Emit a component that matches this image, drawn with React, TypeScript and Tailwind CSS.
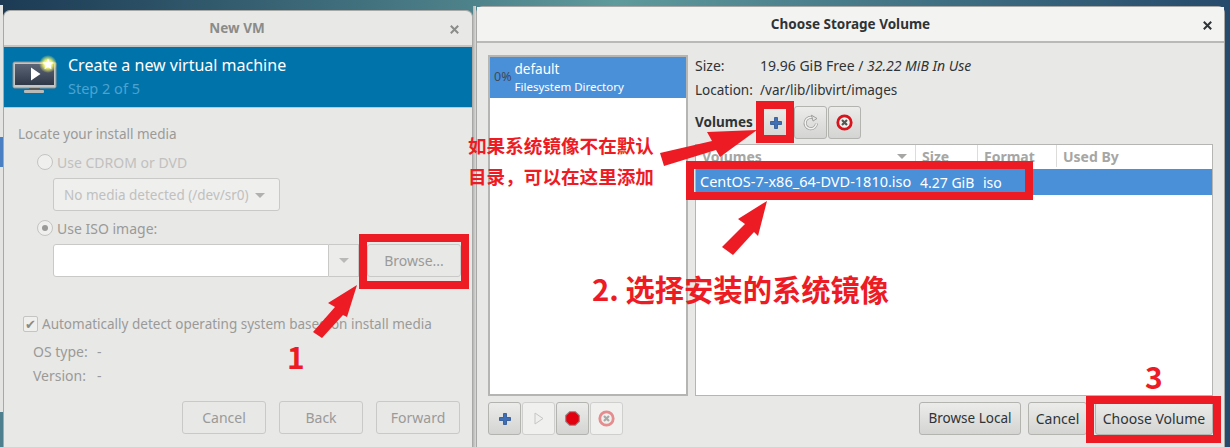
import type { ReactNode } from "react";

const UI_FONT = "font-['Noto_Sans','Open_Sans',sans-serif]";
const CJK_FONT = "font-['Noto_Sans_CJK_SC','Noto_Sans',sans-serif]";

function PlusIcon() {
  return (
    <svg width="14" height="14" viewBox="0 0 14 14">
      <path d="M5.5 1.5h3v4h4v3h-4v4h-3v-4h-4v-3h4z" fill="#3f6fb5" stroke="#2a5291" strokeWidth="0.8" strokeLinejoin="round" />
    </svg>
  );
}

function RefreshIcon() {
  return (
    <svg width="18" height="18" viewBox="0 0 18 18" fill="none">
      <path d="M14.5 9.500A5.700 5.700 0 1 1 11.500 4" stroke="#9b9b99" strokeWidth="3" />
      <path d="M14.5 9.500A5.700 5.700 0 1 1 11.500 4" stroke="#f2f2f1" strokeWidth="1.600" />
      <path d="M9.500 1.200l5.500 3.300-4 2.600z" fill="#e4e4e2" stroke="#8f8f8d" strokeWidth="0.800" />
    </svg>
  );
}

function DeleteIcon({ faded = false }: { faded?: boolean }) {
  return (
    <svg width="17" height="17" viewBox="0 0 17 17" className={faded ? "opacity-45" : ""}>
      <circle cx="8.500" cy="8.500" r="6.700" fill="#f4f1f1" stroke="#d8141c" strokeWidth="2.800" />
      <path d="M6 6l5 5M11 6l-5 5" stroke="#555753" strokeWidth="2.200" />
    </svg>
  );
}

function StopIcon() {
  return (
    <svg width="15" height="15" viewBox="0 0 15 15">
      <path d="M4.600 .7h5.800l3.900 3.900v5.800l-3.900 3.900H4.600L.7 10.400V4.600z" fill="#e3000f" stroke="#8c8c8a" strokeWidth="1.100" />
    </svg>
  );
}

function PlayIcon() {
  return (
    <svg width="10" height="13" viewBox="0 0 10 13" fill="#efefee" stroke="#c6c6c4">
      <path d="M1 1l8 5.500L1 12z" />
    </svg>
  );
}

function CloseIcon({ className }: { className: string }) {
  return (
    <svg width="9" height="9" viewBox="0 0 9 9" className={className} stroke="currentColor" strokeWidth="2">
      <path d="M.8 .8l7.400 7.400M8.200 .8L.8 8.200" />
    </svg>
  );
}

function VmIcon() {
  return (
    <svg width="46" height="38" viewBox="0 0 46 38">
      <defs>
        <linearGradient id="vm-screen" x1="0" y1="0" x2="0" y2="1">
          <stop offset="0" stopColor="#5c6677" />
          <stop offset="1" stopColor="#2f3847" />
        </linearGradient>
        <radialGradient id="vm-glow">
          <stop offset="0.450" stopColor="#f4f56a" />
          <stop offset="1" stopColor="#f4f56a" stopOpacity="0" />
        </radialGradient>
      </defs>
      <rect x="1" y="7" width="43" height="26" rx="1.500" fill="#c5c5c3" stroke="#8f8f8d" />
      <rect x="3" y="9" width="39" height="21" fill="url(#vm-screen)" />
      <path d="M19 12.500l9.500 6.500-9.500 6.500z" fill="#fff" />
      <rect x="17" y="33" width="11" height="2" fill="#5a5a58" />
      <rect x="12" y="35" width="20" height="3" rx="1" fill="#b9b9b7" />
      <circle cx="36" cy="9" r="9" fill="url(#vm-glow)" />
      <path d="M36 3.500l1.700 3.600 3.900.5-2.900 2.700.8 3.900-3.500-2-3.500 2 .8-3.900-2.900-2.700 3.900-.5z" fill="#fff" />
    </svg>
  );
}

function Radio({ checked = false }: { checked?: boolean }) {
  return (
    <span className="flex h-[16px] w-[16px] items-center justify-center rounded-full border border-[#c4c4c2] bg-[#efefee]">
      {checked && <span className="h-[6px] w-[6px] rounded-full bg-[#9a9a98]" />}
    </span>
  );
}

function OldButton({ label, className }: { label: string; className: string }) {
  return (
    <div className={`flex items-center justify-center rounded-[3px] border border-[#c9c9c7] bg-[#e8e8e7] text-[14px] text-[#9a9a98] ${className}`}>
      {label}
    </div>
  );
}

function ToolButton({ children, off = false, className = "" }: { children: ReactNode; off?: boolean; className?: string }) {
  return (
    <div className={`flex h-[33px] w-[33px] items-center justify-center rounded-[3px] border ${off ? "border-[#cfcfcd] bg-[#f0f0ef]" : "border-[#b3b3b0] bg-gradient-to-b from-[#ececeb] to-[#d4d4d2]"} ${className}`}>
      {children}
    </div>
  );
}

function ActionButton({ label, className }: { label: string; className: string }) {
  return (
    <div className={`flex h-[33px] items-center justify-center rounded-[3px] border border-[#b3b3b0] bg-gradient-to-b from-[#ececeb] to-[#d4d4d2] text-[#2e3436] ${className}`}>
      {label}
    </div>
  );
}

function NewVmWindow() {
  return (
    <section className="mt-[10px] flex h-[437px] w-[470px] shrink-0 flex-col rounded-t-[7px] border-x border-t border-[#a8a8a6] bg-[#e8e8e7] text-[#9a9a98]">
      <div className="relative flex h-[36px] shrink-0 items-center justify-center border-b-2 border-[#c4c4c2] pr-[2px] text-[13.500px] font-bold text-[#8a8c8a]">
        New VM
        <CloseIcon className="absolute right-[13px] top-[14px] text-[#8a8c8a]" />
      </div>
      <header className="flex h-[61px] shrink-0 items-start border-b border-[#c4c4c2] bg-[#0073ab] pl-[8px] pt-[8px]">
        <VmIcon />
        <div className="ml-[10px] mt-[-2px]">
          <div className="text-[16px] leading-[24px] text-white">Create a new virtual machine</div>
          <div className="mt-[1px] text-[14.500px] leading-[20px] text-[#4ba3d1]">Step 2 of 5</div>
        </div>
      </header>
      <div className="flex min-h-0 flex-1 flex-col pl-[14px] text-[14px]">
        <div className="mt-[16px] text-[13.500px] leading-[20px]">Locate your install media</div>
        <div className="ml-[19px] mt-[8px] flex h-[20px] items-center gap-[4px] text-[#c0c0be]">
          <Radio />
          <span>Use CDROM or DVD</span>
        </div>
        <div className="ml-[35px] mt-[6px] flex h-[33px] w-[227px] items-center rounded-[3px] border border-[#c9c9c7] bg-[#efefee] pl-[10px] pt-[1px] text-[13.500px] text-[#c0c0be]">
          No media detected (/dev/sr0)
          <span className="ml-[6px] h-0 w-0 border-x-[5px] border-t-[5px] border-x-transparent border-t-[#b0b0ae]" />
        </div>
        <div className="ml-[19px] mt-[7px] flex h-[20px] items-center gap-[4px]">
          <Radio checked />
          <span>Use ISO image:</span>
        </div>
        <div className="ml-[35px] mt-[6px] flex h-[33px] items-start">
          <div className="h-[33px] w-[276px] rounded-l-[3px] border border-[#c9c9c7] bg-white" />
          <div className="flex h-[33px] w-[30px] items-center justify-center border-y border-r border-[#c9c9c7] bg-[#ececeb]">
            <span className="h-0 w-0 border-x-[5px] border-t-[5px] border-x-transparent border-t-[#b9b9b7]" />
          </div>
          <OldButton label="Browse..." className="ml-[8px] h-[33px] w-[94px]" />
        </div>
        <div className="ml-[5px] mt-[37px] flex h-[20px] items-center gap-[4px] text-[13.500px]">
          <span className="flex h-[16px] w-[15px] items-center justify-center rounded-[2px] border border-[#c4c4c2] bg-[#efefee] text-[13px] leading-none text-[#8a8a88]">✔</span>
          <span>Automatically detect operating system based on install media</span>
        </div>
        <div className="ml-[15px] mt-[8px] grid grid-cols-[62px_auto] justify-start gap-y-[4px] leading-[20px]">
          <span>OS type:</span>
          <span className="pl-[2px]">-</span>
          <span>Version:</span>
          <span className="pl-[2px]">-</span>
        </div>
        <div className="mt-[15px] flex gap-[13px] pl-[164px]">
          <OldButton label="Cancel" className="h-[33px] w-[84px]" />
          <OldButton label="Back" className="h-[33px] w-[84px]" />
          <OldButton label="Forward" className="h-[33px] w-[84px]" />
        </div>
      </div>
    </section>
  );
}

function StorageWindow() {
  return (
    <section className="mt-[6px] flex h-[441px] w-[749px] shrink-0 flex-col rounded-t-[7px] border-x border-t border-[#a8a8a6] bg-[#e8e8e7] text-[14px] text-[#2e3436]">
      <div className="relative flex h-[36px] shrink-0 items-center justify-center border-b-2 border-[#b9b9b7] bg-[#f3f3f2] text-[13.500px] font-bold">
        Choose Storage Volume
        <CloseIcon className="absolute right-[12px] top-[14px] text-[#2e3436]" />
      </div>
      <div className="flex min-h-0 flex-1 flex-col pl-[11px] pr-[11px] pt-[12px]">
        <div className="flex h-[341px] shrink-0 gap-[7px]">
          <div className="h-full w-[200px] shrink-0 border-2 border-[#b5b5b3] bg-white">
            <div className="flex h-[41px] items-center bg-[#4a90d9] pl-[4px] text-white">
              <span className="text-[12.500px] text-[#3d4a57]">0%</span>
              <div className="ml-[3px] mt-[-1px] leading-none">
                <div className="text-[13.500px] leading-[18px]">default</div>
                <div className="text-[11.500px] leading-[17px]">Filesystem Directory</div>
              </div>
            </div>
          </div>
          <div className="flex min-w-0 flex-1 flex-col">
            <div className="flex h-[20px] items-center">
              <span className="w-[65px]">Size:</span>
              <span>19.96 GiB Free / <em>32.22 MiB In Use</em></span>
            </div>
            <div className="mt-[5px] flex h-[20px] items-center">
              <span className="w-[65px] text-[13.500px]">Location:</span>
              <span className="text-[13.500px]">/var/lib/libvirt/images</span>
            </div>
            <div className="mt-[6px] flex h-[33px] items-center">
              <span className="w-[64px] text-[13.500px] font-bold">Volumes</span>
              <ToolButton className="w-[34px]"><PlusIcon /></ToolButton>
              <ToolButton className="ml-px"><RefreshIcon /></ToolButton>
              <ToolButton className="ml-px"><DeleteIcon /></ToolButton>
            </div>
            <div className="mt-[5px] min-h-0 flex-1 border border-[#b5b5b3] bg-white">
              <div className="grid h-[24px] grid-cols-[220px_62px_79px_1fr] items-center pb-[2px] font-bold text-[#a6a6a4]">
                <div className="flex h-full items-center justify-between border-r border-[#dcdcda] pl-[6px] pr-[8px]">
                  Volumes
                  <span className="h-0 w-0 border-x-[5px] border-t-[5px] border-x-transparent border-t-[#a6a6a4]" />
                </div>
                <div className="flex h-full items-center border-r border-[#dcdcda] pl-[6px]">Size</div>
                <div className="flex h-full items-center border-r border-[#dcdcda] pl-[6px]">Format</div>
                <div className="pl-[6px]">Used By</div>
              </div>
              <div className="grid h-[26px] grid-cols-[220px_62px_79px_1fr] items-center whitespace-nowrap bg-[#4a90d9] text-white">
                <span className="pl-[4px] text-[14.500px]">CentOS-7-x86_64-DVD-1810.iso</span>
                <span className="pl-[4px]">4.27 GiB</span>
                <span className="pl-[5px]">iso</span>
              </div>
            </div>
          </div>
        </div>
        <div className="mt-[6px] flex items-start">
          <ToolButton><PlusIcon /></ToolButton>
          <ToolButton off className="ml-px"><PlayIcon /></ToolButton>
          <ToolButton className="ml-px"><StopIcon /></ToolButton>
          <ToolButton off className="ml-px"><DeleteIcon faded /></ToolButton>
          <ActionButton label="Browse Local" className="ml-auto w-[102px] text-[13.500px]" />
          <ActionButton label="Cancel" className="ml-[7px] w-[59px] text-[14px]" />
          <ActionButton label="Choose Volume" className="ml-[8px] w-[118px] text-[14px]" />
        </div>
      </div>
    </section>
  );
}

// red marks drawn over the screenshot
function Annotations() {
  const frame = "absolute border-[8px] border-[#ed1c24]";
  return (
    <div className={`pointer-events-none absolute inset-0 font-bold text-[#ed1c24] ${CJK_FONT}`}>
      <div className={`${frame} left-[359px] top-[234px] h-[55px] w-[110px]`} />
      <div className={`${frame} left-[756px] top-[101px] h-[42px] w-[38px]`} />
      <div className={`${frame} left-[686px] top-[161px] h-[39px] w-[347px]`} />
      <div className={`${frame} left-[1086px] top-[396px] h-[47px] w-[135px]`} />
      <svg className="absolute inset-0" width="1230" height="447" fill="#ed1c24">
        <polygon points="357,285 328,303 335,307 313,332 322,338 343,315 347,317" />
        <polygon points="757,130 707,132 712,141 660,153 664,166 716,150 720,157" />
        <polygon points="767,201 738,219 745,224 722,247 733,255 754,232 758,236" />
      </svg>
      <div className="absolute left-[468px] top-[131px] text-[18.600px] leading-[28px]">如果系统镜像不在默认</div>
      <div className="absolute left-[468px] top-[162px] text-[18.600px] leading-[28px]">目录，可以在这里添加</div>
      <div className="absolute left-[592px] top-[268px] text-[29.300px] leading-[40px]">2. 选择安装的系统镜像</div>
      <div className="absolute left-[287px] top-[336px] text-[30px] leading-[40px]">1</div>
      <div className="absolute left-[1145px] top-[356px] text-[30px] leading-[40px]">3</div>
    </div>
  );
}

export default function App() {
  return (
    <main className={`relative flex h-[447px] w-[1230px] overflow-hidden bg-gradient-to-r from-[#1c3a54] via-[#5f9a9c] to-[#264a6b] ${UI_FONT}`}>
      <div className="mt-[5px] flex h-[442px] w-[3px] shrink-0 flex-col bg-[#e4e4e3]">
        <div className="mt-[132px] h-[30px] bg-[#4a7fc4]" />
        <div className="mt-[245px] h-[35px] bg-[#4e7f8f]" />
      </div>
      <NewVmWindow />
      <div className="mt-[6px] h-[441px] w-[3px] shrink-0 bg-gradient-to-r from-[#b5b5b3] to-[#dadad9]" />
      <StorageWindow />
      <Annotations />
    </main>
  );
}
